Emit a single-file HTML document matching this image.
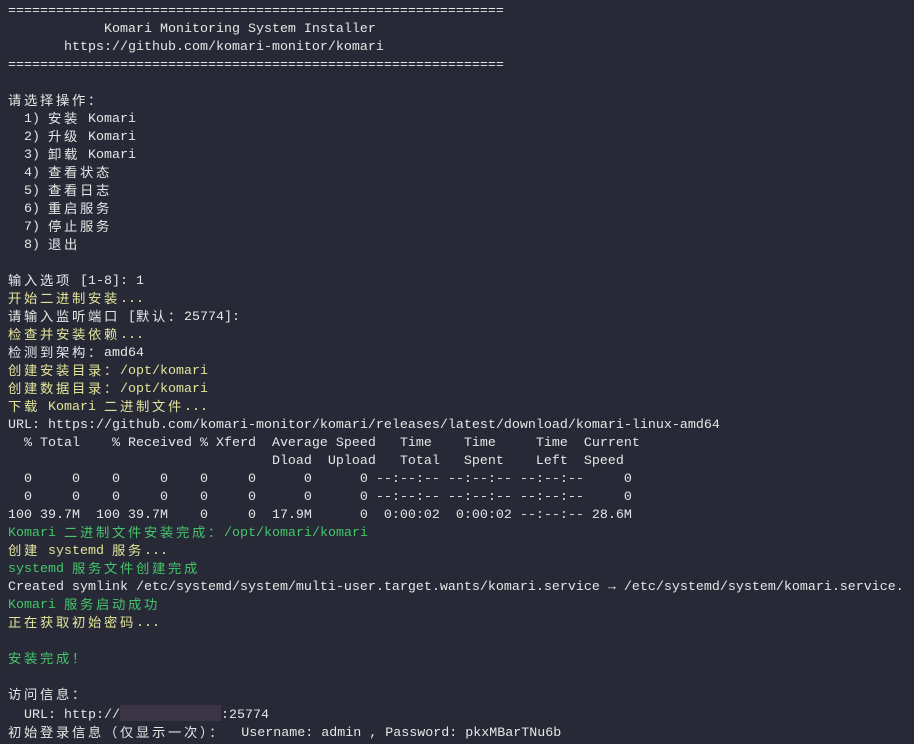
<!DOCTYPE html>
<html><head><meta charset="utf-8"><style>
html,body{margin:0;padding:0;background:#272a36;width:914px;height:744px;overflow:hidden}
pre{margin:0;padding:3px 0 0 8px;font-family:"Liberation Mono",monospace;font-size:13.33px;line-height:18px;color:#e6e6e6;white-space:pre}
.c{font-family:"Noto Sans CJK SC",sans-serif;letter-spacing:2.67px;font-size:13.33px;line-height:0;position:relative;top:1px}
.y{color:#e3e39a}.g{color:#45c46c}
.b{display:inline-block;width:101px;height:16px;background:#3a3445;vertical-align:-3px;line-height:0}
</style></head><body><pre>==============================================================
            Komari Monitoring System Installer
       https://github.com/komari-monitor/komari
==============================================================

<span class="c">请选择操作：</span>
  1) <span class="c">安装</span> Komari
  2) <span class="c">升级</span> Komari
  3) <span class="c">卸载</span> Komari
  4) <span class="c">查看状态</span>
  5) <span class="c">查看日志</span>
  6) <span class="c">重启服务</span>
  7) <span class="c">停止服务</span>
  8) <span class="c">退出</span>

<span class="c">输入选项</span> [1-8]: 1
<span class="y"><span class="c">开始二进制安装</span>...</span>
<span class="c">请输入监听端口</span> [<span class="c">默认：</span>25774]:
<span class="y"><span class="c">检查并安装依赖</span>...</span>
<span class="c">检测到架构：</span>amd64
<span class="y"><span class="c">创建安装目录：</span>/opt/komari</span>
<span class="y"><span class="c">创建数据目录：</span>/opt/komari</span>
<span class="y"><span class="c">下载</span> Komari <span class="c">二进制文件</span>...</span>
URL: https://github.com/komari-monitor/komari/releases/latest/download/komari-linux-amd64
  % Total    % Received % Xferd  Average Speed   Time    Time     Time  Current
                                 Dload  Upload   Total   Spent    Left  Speed
  0     0    0     0    0     0      0      0 --:--:-- --:--:-- --:--:--     0
  0     0    0     0    0     0      0      0 --:--:-- --:--:-- --:--:--     0
100 39.7M  100 39.7M    0     0  17.9M      0  0:00:02  0:00:02 --:--:-- 28.6M
<span class="g">Komari <span class="c">二进制文件安装完成：</span>/opt/komari/komari</span>
<span class="y"><span class="c">创建</span> systemd <span class="c">服务</span>...</span>
<span class="g">systemd <span class="c">服务文件创建完成</span></span>
Created symlink /etc/systemd/system/multi-user.target.wants/komari.service → /etc/systemd/system/komari.service.
<span class="g">Komari <span class="c">服务启动成功</span></span>
<span class="y"><span class="c">正在获取初始密码</span>...</span>

<span class="g"><span class="c">安装完成！</span></span>

<span class="c">访问信息：</span>
  URL: http://<span class="b"></span>:25774
<span class="c">初始登录信息（仅显示一次）：</span>  Username: admin , Password: pkxMBarTNu6b
</pre></body></html>
